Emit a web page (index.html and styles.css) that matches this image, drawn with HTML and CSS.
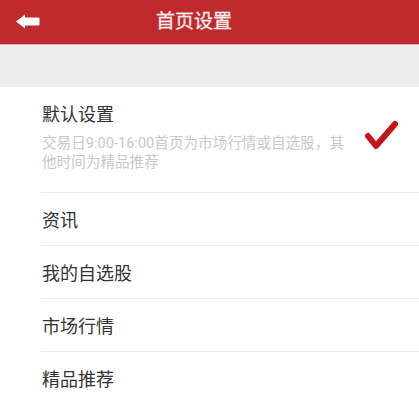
FILE: index.html
```html
<!DOCTYPE html>
<html lang="zh-CN">
<head>
<meta charset="utf-8">
<title>首页设置</title>
<link rel="stylesheet" href="styles.css">
</head>
<body>
<header class="topbar">
  <a class="back" href="#" aria-label="返回">
    <svg width="24" height="16" viewBox="0 0 24 16"><path d="M0 7.5 L9 0.5 L9 3.5 L22.5 3.5 Q23.5 3.5 23.5 4.5 L23.5 10.5 Q23.5 11.5 22.5 11.5 L9 11.5 L9 14.5 Z" fill="#fff"/></svg>
  </a>
  <h1 class="title">首页设置</h1>
</header>
<div class="band"></div>
<ul class="options">
  <li class="option option-default">
    <div class="option-text">
      <div class="option-name">默认设置</div>
      <div class="option-desc">交易日9:00-16:00首页为市场行情或自选股，其他时间为精品推荐</div>
    </div>
    <svg class="check" width="34" height="32" viewBox="0 0 34 32"><polyline points="3,16 11,26 30,4" fill="none" stroke="#c1161d" stroke-width="6" stroke-linecap="round" stroke-linejoin="round"/></svg>
  </li>
  <li class="option">资讯</li>
  <li class="option">我的自选股</li>
  <li class="option">市场行情</li>
  <li class="option">精品推荐</li>
</ul>
</body>
</html>
```

FILE: styles.css
```css
html, body {
  margin: 0;
  padding: 0;
  background: #ffffff;
  font-family: Roboto, "Noto Sans CJK SC", sans-serif;
}

.topbar {
  height: 44px;
  background: #bf2a2c;
  border-bottom: 1px solid #e3a9a9;
  display: flex;
  align-items: center;
}

.back {
  display: flex;
  align-items: center;
  width: 40px;
  padding-left: 16px;
  height: 44px;
  box-sizing: border-box;
}

.title {
  margin: 0 0 0 116px;
  font-size: 19px;
  font-weight: normal;
  color: #fbeeee;
  line-height: 44px;
  -webkit-text-stroke: 0.3px #fbeeee;
}

.band {
  height: 42px;
  background: #eeeeee;
}

.options {
  list-style: none;
  margin: 0 0 0 41px;
  padding: 0;
}

.option {
  height: 52px;
  border-bottom: 1px solid #ececec;
  display: flex;
  align-items: center;
  padding-left: 1px;
  font-size: 18px;
  color: #333333;
}

.option-default {
  height: auto;
  padding: 16px 0 20px 1px;
  justify-content: space-between;
}

.option-name {
  font-size: 18px;
  line-height: 24px;
  color: #333333;
}

.option-desc {
  margin-top: 7px;
  width: 310px;
  font-size: 14.6px;
  line-height: 19px;
  color: #c8c8c8;
}

.check {
  margin-right: 20px;
  margin-top: -4px;
}
```
